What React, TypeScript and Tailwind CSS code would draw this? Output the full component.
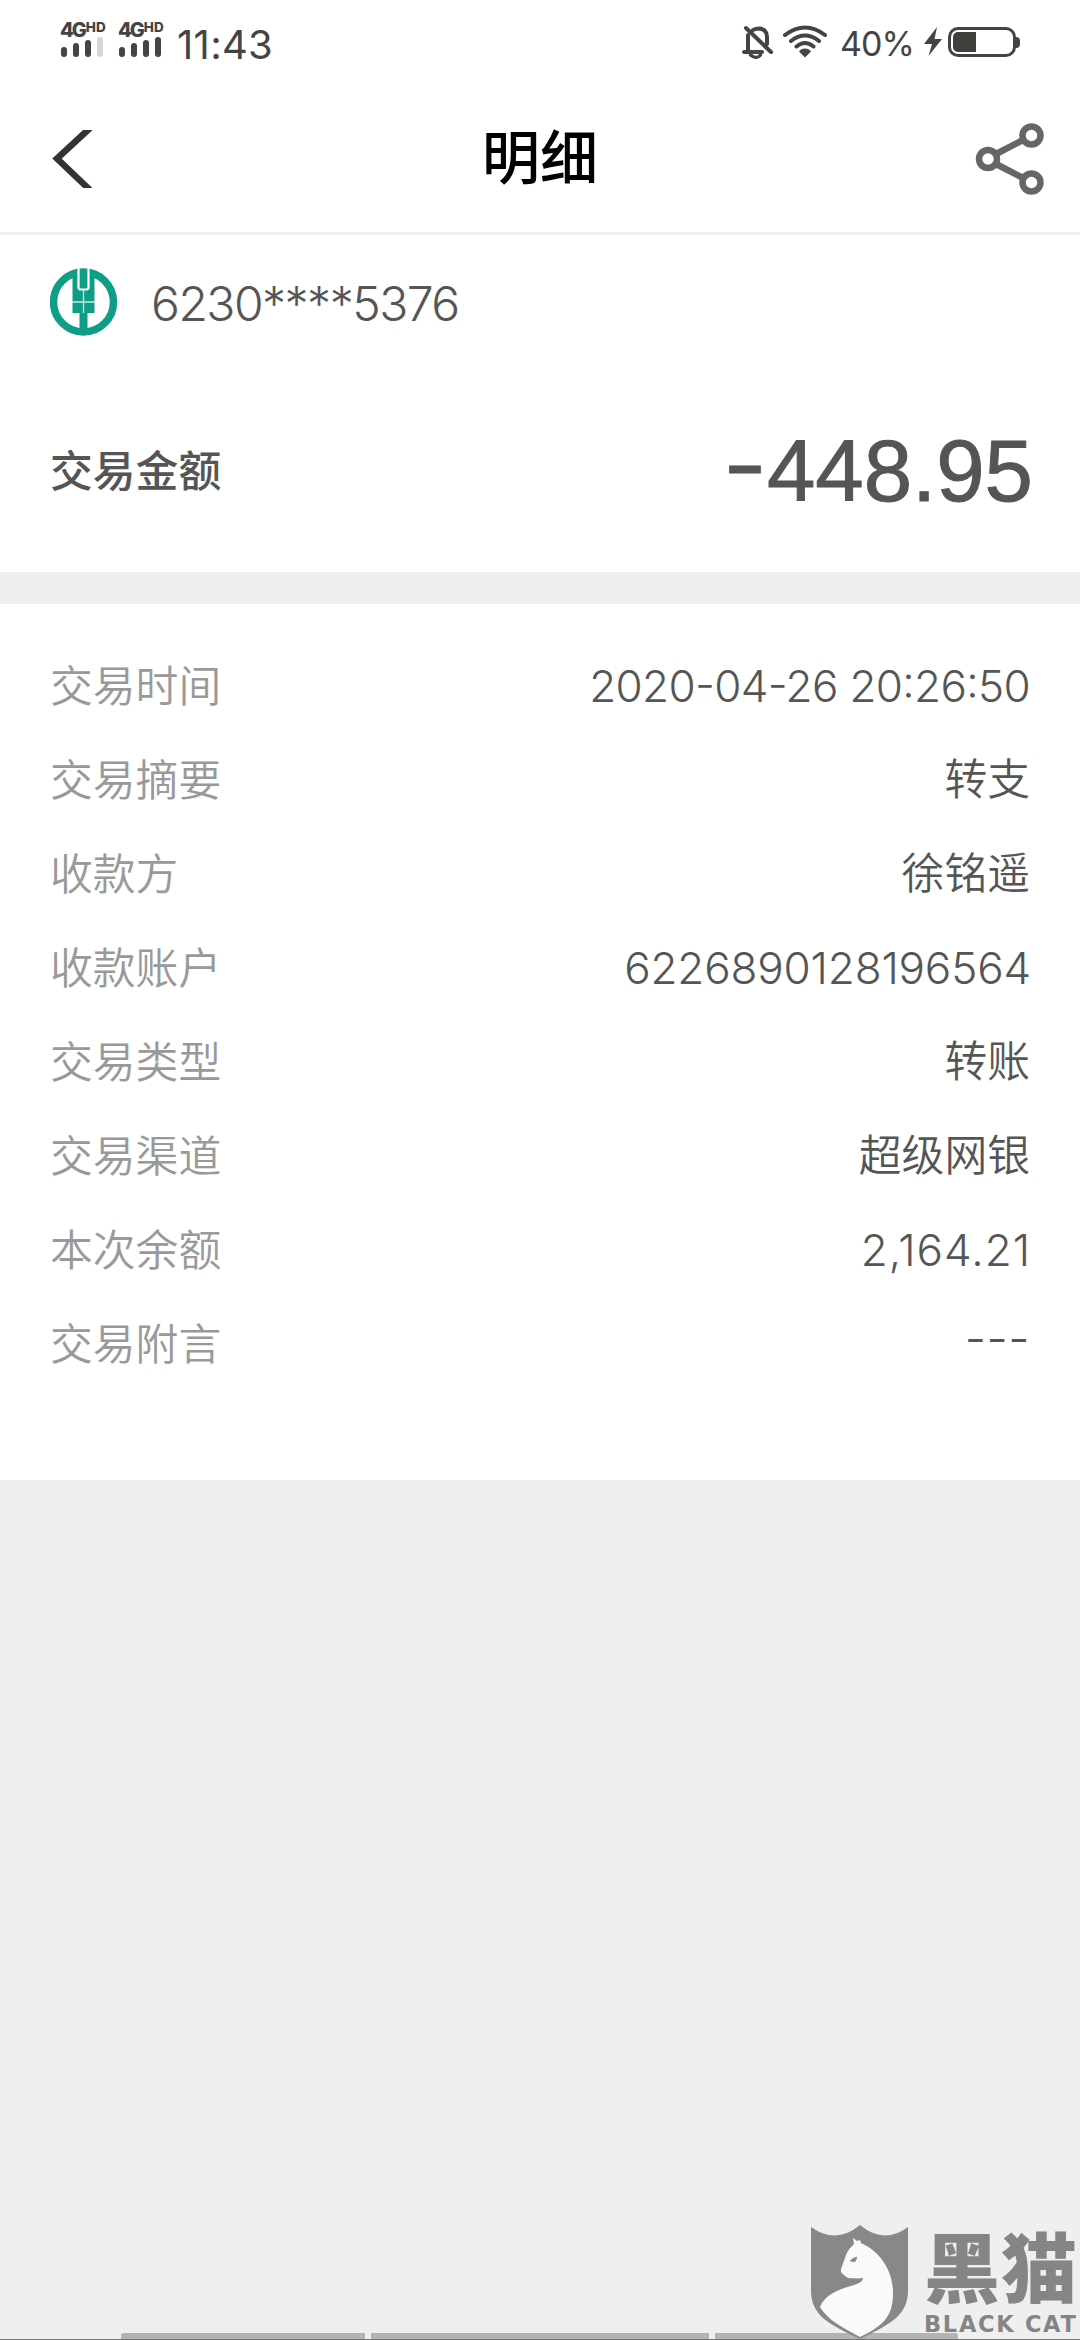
const details = [
  { label: "交易时间", value: "2020-04-26 20:26:50", style: "text-[44px] tracking-[-0.65px]" },
  { label: "交易摘要", value: "转支", style: "" },
  { label: "收款方", value: "徐铭遥", style: "" },
  { label: "收款账户", value: "6226890128196564", style: "text-[44px] tracking-[-0.15px] mr-[-1px]" },
  { label: "交易类型", value: "转账", style: "" },
  { label: "交易渠道", value: "超级网银", style: "" },
  { label: "本次余额", value: "2,164.21", style: "text-[44px] tracking-[1px] mr-[-1px]" },
  { label: "交易附言", value: "---", style: "text-[47px] tracking-[0.500px] pb-[6px]" },
];

const Signal = ({ weak }: { weak?: boolean }) => {
  return (
    <div className="w-[46px] h-[37px] flex flex-col justify-between">
      <div className="h-[16px] flex items-start leading-none font-extrabold">
        <span className="mt-[2px] text-[20px] leading-[16px] tracking-[-2px]">4G</span>
        <span className="ml-[1px] mt-[2px] text-[13.500px] leading-[10px]">HD</span>
      </div>
      <div className="flex items-end gap-[6px] pl-px">
        <div className="w-[6px] h-[10px] rounded-[3px] bg-[#444]"></div>
        <div className="w-[6px] h-[14px] rounded-[3px] bg-[#444]"></div>
        <div className="w-[6px] h-[17px] rounded-[3px] bg-[#444]"></div>
        <div className={`w-[6px] h-[20px] rounded-[3px] ${weak ? "bg-[#d6d6d6]" : "bg-[#444]"}`}></div>
      </div>
    </div>
  );
};

const StatusBar = () => {
  return (
    <div className="h-[80px] pl-[60px] pr-[60px] flex items-start justify-between text-[#444]">
      <div className="flex items-start pt-[20px]">
        <Signal weak />
        <div className="w-[12px]"></div>
        <Signal />
        <span className="ml-[13px] mt-[5px] text-[40px] leading-[40px] tracking-[0.3px]">11:43</span>
      </div>
      <div className="flex items-start pt-[24px]">
        <svg className="w-[32px] h-[36px]" viewBox="0 0 32 36" fill="none" stroke="#444" strokeWidth="4" strokeLinecap="round">
          <path d="M4 4 29 28" />
          <path d="M6 11v17M11 6q3-1.500 6-1.500 8 .5 8 8.500v7M2 28h18" />
          <path d="M8.500 31q6 5 10 0" strokeWidth="3.500" />
        </svg>
        <svg className="ml-[8px] w-[46px] h-[36px]" viewBox="0 0 46 36" fill="none" stroke="#444" strokeWidth="4" strokeLinecap="round">
          <path d="M3 11q20-15 40 0M9 17q14-11 28 0M14.500 22.500q8.500-7 17 0" />
          <path d="M23 24.500q4 0 6 3l-6 6-6-6q2-3 6-3z" fill="#444" stroke="none" />
        </svg>
        <span className="ml-[12px] mt-[3px] w-[84px] text-[34px] leading-[34px] tracking-[-0.9px]">40%</span>
        <svg className="w-[18px] h-[30px] mt-[3px]" viewBox="0 0 18 30" fill="#444">
          <path d="M13 0 0 17h8L4.500 29 18 12h-7.500z" />
        </svg>
        <div className="ml-[6px] mt-[3px] flex items-center">
          <div className="w-[68px] h-[30px] rounded-[10px] border-[3px] border-[#444] p-[2px]">
            <div className="w-[23px] h-[20px] rounded-l-[5px] bg-[#40403a]"></div>
          </div>
          <div className="w-[4px] h-[11px] rounded-r-[4px] bg-[#444]"></div>
        </div>
      </div>
    </div>
  );
};

const Header = () => {
  return (
    <header className="h-[155px] pl-[52px] pr-[36px] border-b-[3px] border-[#efefef] flex items-start justify-between">
      <svg className="w-[54px] h-[58px] mt-[50px]" viewBox="0 0 54 58" fill="none" stroke="#333" strokeWidth="6.500">
        <path d="M38 -2 5 28.500 38 60" />
      </svg>
      <h1 className="mt-[38px] text-[58px] leading-[80px] font-medium text-black">明细</h1>
      <svg className="w-[70px] h-[72px] mt-[43px]" viewBox="0 0 70 72" fill="none" stroke="#666" strokeWidth="6.500">
        <circle cx="14" cy="36" r="9" />
        <circle cx="57.500" cy="12.500" r="9" />
        <circle cx="57.500" cy="59.500" r="9" />
        <path d="M22 31 49 17M22 41l27 14" />
      </svg>
    </header>
  );
};

const BankLogo = () => {
  return (
    <svg className="w-[68px] h-[68px]" viewBox="0 0 68 68">
      <circle cx="33.500" cy="34" r="30" fill="none" stroke="#0f9d85" strokeWidth="7.500" />
      <path d="M22.500 2H44.500V45h-22z" fill="#0f9d85" />
      <path d="M29.500 45h8v19h-8z" fill="#0f9d85" />
      <path d="M28.500 0v19.500q0 2 2.500 2h5q2.500 0 2.500-2V0" fill="none" stroke="#fff" strokeWidth="2.200" />
      <path d="M33.500 22v23M22 34h23" stroke="#c9ebe4" strokeWidth="1.300" />
    </svg>
  );
};

const Watermark = () => {
  return (
    <div className="absolute left-[811px] top-[2225px] w-[269px] h-[115px] flex items-start">
      <svg className="w-[97px] h-[114px] shrink-0" viewBox="0 0 97 114">
        <path d="M0 2q25 18 49-2 24 20 48 2v63c0 26-18 34-48 49C18 99 0 91 0 65z" fill="#898787" />
        <path d="M42 13l4 3 3-1 1 3c20 9 32 28 32 50 0 24-10 33-33 44C30 102 16 94 9 82c5-13 20-18 34-22 6-2 9-4 9-7-5 1-10 0-15 0-4-3-8-5-7-9l4-11c2-7 5-10 9-14z" fill="#fafafa" />
        <path d="M39 36q4-4 7-4-1 5-3 5zM41 33l3 3" fill="#898787" stroke="#898787" strokeWidth=".5" />
      </svg>
      <div className="ml-[16px] text-[#868484] whitespace-nowrap">
        <div className="mt-[6px] text-[76px] leading-[76px] font-black tracking-[1px]">黑猫</div>
        <div className="mt-[5px] text-[22.500px] leading-[24px] font-bold font-['DejaVu_Sans'] tracking-[1.700px]">BLACK CAT</div>
      </div>
    </div>
  );
};

const App = () => {
  return (
    <main className="relative w-[1080px] h-[2340px] overflow-hidden bg-[#efefef] flex flex-col font-[Inter,'Noto_Sans_CJK_SC',sans-serif]">
      <div className="bg-white">
        <StatusBar />
        <Header />
        <section className="h-[337px] px-[50px]">
          <div className="h-[134px] flex items-center">
            <BankLogo />
            <span className="ml-[33px] mt-[4px] text-[48px] leading-[60px] font-[350] tracking-[-1.5px] text-[#555]">6230****5376</span>
          </div>
          <div className="h-[203px] pb-[1px] flex items-start justify-between text-[#555]">
            <span className="mt-[71px] text-[42.800px] leading-[64px] font-medium">交易金额</span>
            <span className="mt-[51px] mr-[-3px] text-[87px] leading-[100px] font-['Liberation_Sans'] [-webkit-text-stroke:1px_#555]">
              <span className="inline-block origin-right scale-x-110 font-[Inter] [font-feature-settings:'case']">-</span>448.95
            </span>
          </div>
        </section>
      </div>
      <section className="mt-[32px] h-[876px] bg-white px-[50px] pt-[35px]">
        {details.map((item) => {
          return (
            <div key={item.label} className="h-[94px] flex items-center justify-between text-[42.800px] leading-[60px] font-[350]">
              <span className="pt-[2px] text-[#999]">{item.label}</span>
              <span className={`text-[#555] [font-feature-settings:'case'] ${item.style}`}>{item.value}</span>
            </div>
          );
        })}
      </section>
      <div className="mt-auto h-[7px] pl-[121px] pr-[122px] border-b border-[#777] flex gap-[6px]">
        <div className="w-[244px] h-[6px] bg-[#b3b3b3] rounded-tl-[3px]"></div>
        <div className="w-[338px] h-[6px] bg-[#b3b3b3]"></div>
        <div className="w-[243px] h-[6px] bg-[#b3b3b3] rounded-tr-[3px]"></div>
      </div>
      <Watermark />
    </main>
  );
};

export default App;
